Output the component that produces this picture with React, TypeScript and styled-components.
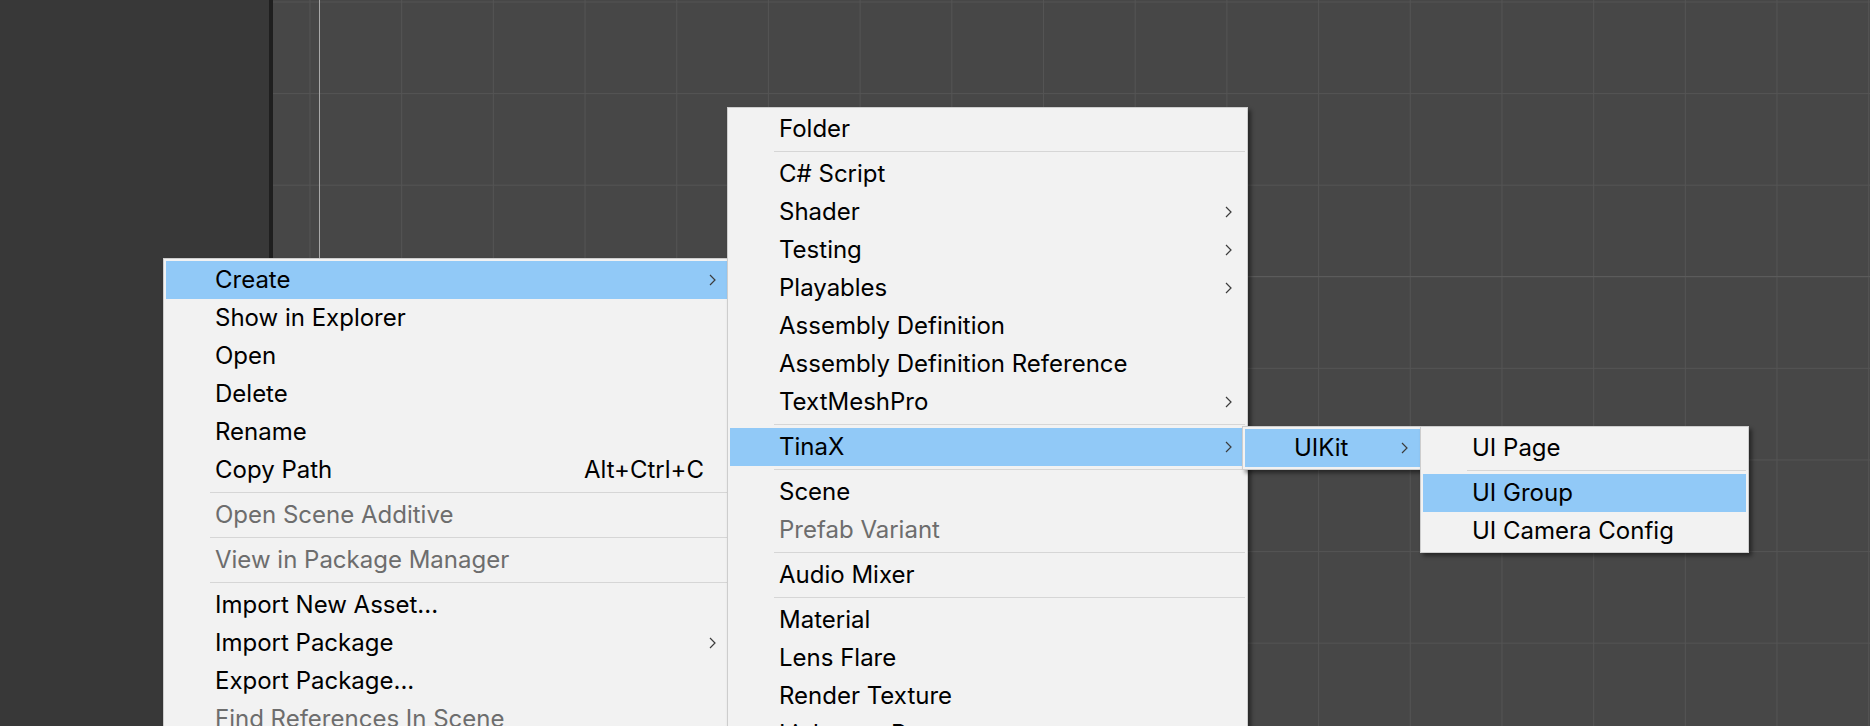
import React from "react";
import styled, { createGlobalStyle } from "styled-components";

const GlobalStyle = createGlobalStyle`
  html, body {
    margin: 0;
    padding: 0;
    width: 1870px;
    height: 726px;
    overflow: hidden;
    background: #474747;
  }
  body {
    font-family: Inter, "Noto Sans", sans-serif;
  }
`;

const Page = styled.div`
  position: relative;
  display: flex;
  width: 1870px;
  height: 726px;
  overflow: hidden;
`;

const SidePanel = styled.div`
  flex: none;
  width: 269px;
  background: #383838;
`;

const Splitter = styled.div`
  flex: none;
  width: 4px;
  background: #1f1f1f;
`;

const SceneView = styled.div`
  flex: 1;
  background-color: #474747;
  background-image:
    linear-gradient(to right, transparent 46px, #a9a9a9 46px, #a9a9a9 47px, transparent 47px),
    linear-gradient(to bottom, transparent 276px, #5b5b5b 276px, #5b5b5b 277px, transparent 277px),
    linear-gradient(to right, #545454 1px, transparent 1px),
    linear-gradient(to bottom, #545454 1px, transparent 1px);
  background-size: 100% 100%, 100% 100%, 91.7px 100%, 100% 91.6px;
  background-position: 0 0, 0 0, 36.5px 0, 0 1.5px;
  background-repeat: no-repeat, no-repeat, repeat-x, repeat-y;
`;

const Menu = styled.div<{ $x: number; $y: number; $w: number; $z: number }>`
  position: absolute;
  left: ${(p) => p.$x}px;
  top: ${(p) => p.$y}px;
  width: ${(p) => p.$w}px;
  z-index: ${(p) => p.$z};
  box-sizing: border-box;
  display: flex;
  flex-direction: column;
  padding: 2px;
  background: #f2f2f2;
  border: 1px solid #cdcdcd;
  box-shadow: 3px 3px 4px rgba(0, 0, 0, 0.45);
`;

const Item = styled.div<{ $active?: boolean; $disabled?: boolean }>`
  display: flex;
  align-items: center;
  flex: none;
  height: 38px;
  padding-left: 49px;
  background: ${(p) => (p.$active ? "#91c9f7" : "transparent")};
  color: ${(p) => (p.$disabled ? "#6d6d6d" : "#000000")};
  font-family: Inter, "Noto Sans", sans-serif;
  font-size: 24px;
  line-height: 1;
  white-space: nowrap;
`;

const Label = styled.span`
  flex: 1;
`;

const Shortcut = styled.span`
  margin-right: 25px;
`;

const ArrowIcon = styled.svg`
  flex: none;
  width: 7px;
  height: 12px;
  margin-right: 13px;
`;

const Separator = styled.div`
  flex: none;
  height: 1px;
  margin: 3px 0 3px 44px;
  background: #d6d6d6;
`;

type Entry =
  | { sep: true }
  | { label: string; sub?: boolean; active?: boolean; disabled?: boolean; shortcut?: string };

const Arrow = () => (
  <ArrowIcon viewBox="0 0 7 12">
    <polyline points="1,1 6,6 1,11" fill="none" stroke="#3c3c3c" strokeWidth="1.2" />
  </ArrowIcon>
);

const MenuList = ({ items }: { items: Entry[] }) => (
  <>
    {items.map((it, i) =>
      "sep" in it ? (
        <Separator key={i} />
      ) : (
        <Item key={i} $active={it.active} $disabled={it.disabled}>
          <Label>{it.label}</Label>
          {it.shortcut && <Shortcut>{it.shortcut}</Shortcut>}
          {it.sub && <Arrow />}
        </Item>
      )
    )}
  </>
);

const assetMenu: Entry[] = [
  { label: "Create", sub: true, active: true },
  { label: "Show in Explorer" },
  { label: "Open" },
  { label: "Delete" },
  { label: "Rename" },
  { label: "Copy Path", shortcut: "Alt+Ctrl+C" },
  { sep: true },
  { label: "Open Scene Additive", disabled: true },
  { sep: true },
  { label: "View in Package Manager", disabled: true },
  { sep: true },
  { label: "Import New Asset..." },
  { label: "Import Package", sub: true },
  { label: "Export Package..." },
  { label: "Find References In Scene", disabled: true },
];

const createMenu: Entry[] = [
  { label: "Folder" },
  { sep: true },
  { label: "C# Script" },
  { label: "Shader", sub: true },
  { label: "Testing", sub: true },
  { label: "Playables", sub: true },
  { label: "Assembly Definition" },
  { label: "Assembly Definition Reference" },
  { label: "TextMeshPro", sub: true },
  { sep: true },
  { label: "TinaX", sub: true, active: true },
  { sep: true },
  { label: "Scene" },
  { label: "Prefab Variant", disabled: true },
  { sep: true },
  { label: "Audio Mixer" },
  { sep: true },
  { label: "Material" },
  { label: "Lens Flare" },
  { label: "Render Texture" },
  { label: "Lightmap Parameters" },
];

const tinaxMenu: Entry[] = [{ label: "UIKit", sub: true, active: true }];

const uikitMenu: Entry[] = [
  { label: "UI Page" },
  { sep: true },
  { label: "UI Group", active: true },
  { label: "UI Camera Config" },
];

export default function App() {
  return (
    <>
      <GlobalStyle />
      <Page>
        <SidePanel />
        <Splitter />
        <SceneView />
        <Menu $x={163} $y={258} $w={569} $z={1}>
          <MenuList items={assetMenu} />
        </Menu>
        <Menu $x={727} $y={107} $w={521} $z={2}>
          <MenuList items={createMenu} />
        </Menu>
        <Menu $x={1242} $y={426} $w={182} $z={3}>
          <MenuList items={tinaxMenu} />
        </Menu>
        <Menu $x={1420} $y={426} $w={329} $z={4}>
          <MenuList items={uikitMenu} />
        </Menu>
      </Page>
    </>
  );
}
